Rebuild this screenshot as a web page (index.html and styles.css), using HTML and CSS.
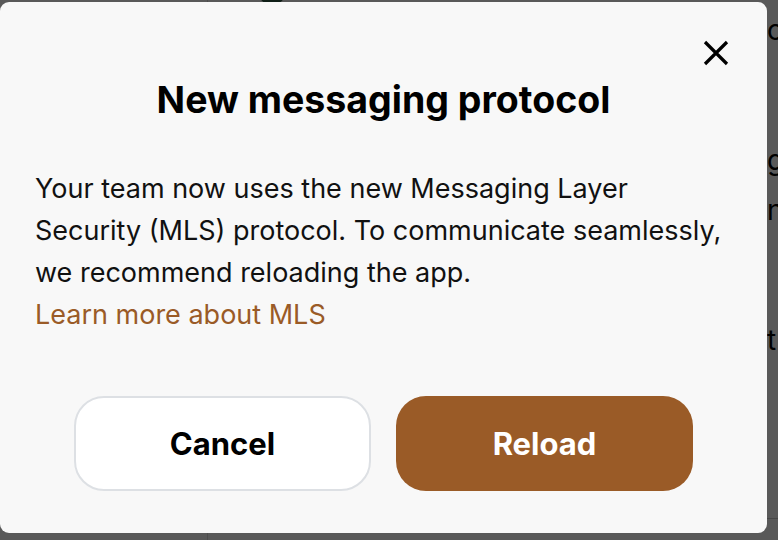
FILE: index.html
```html
<!DOCTYPE html>
<html lang="en">
  <head>
    <meta charset="UTF-8">
    <meta name="viewport" content="width=device-width, initial-scale=1.0">
    <title>New messaging protocol</title>
    <link rel="stylesheet" href="styles.css">
  </head>
  <body>
    <div class="app">
      <div class="sidebar">
        <div class="avatar"></div>
      </div>
      <div class="main">
        <div class="side-list">
          <p class="row-1">o</p>
          <p class="row-2">g</p>
          <p class="row-3">n</p>
          <p class="row-4">t</p>
        </div>
      </div>
    </div>

    <div class="overlay">
      <div class="modal">
        <button class="close-button" aria-label="Close">
          <svg width="26" height="26" viewBox="0 0 26 26">
            <path d="M2 2 L24 24 M24 2 L2 24" stroke="#000" stroke-width="3.2" fill="none"/>
          </svg>
        </button>
        <h1>New messaging protocol</h1>
        <p class="modal-text">
          Your team now uses the new Messaging Layer Security (MLS) protocol. To communicate seamlessly, we recommend reloading the app.
        </p>
        <a class="learn-link" href="#">Learn more about MLS</a>
        <div class="button-row">
          <button class="btn btn-cancel">Cancel</button>
          <button class="btn btn-reload">Reload</button>
        </div>
      </div>
    </div>
  </body>
</html>
```

FILE: styles.css
```css
body {
  margin: 0;
  padding: 0;
  font-family: Inter, "Noto Sans", sans-serif;
  width: 778px;
  height: 540px;
  overflow: hidden;
  background-color: #fff;
}

.app {
  display: flex;
  height: 540px;
}

.sidebar {
  width: 207px;
  border-right: 1px solid #ddd;
}

.avatar {
  width: 28px;
  height: 28px;
  border-radius: 50%;
  background-color: #2f5a44;
  margin: -23px 0 0 258px;
}

.main {
  flex: 1;
  display: flex;
  justify-content: flex-end;
  border-bottom: 1px solid #ccc;
  height: 518px;
}

.side-list {
  width: 11px;
  font-size: 28px;
  line-height: 34px;
  color: #000;
}

.side-list p {
  margin: 0;
}

.row-1 {
  padding-top: 13px;
}

.row-2 {
  padding-top: 96px;
}

.row-3 {
  padding-top: 16px;
}

.row-4 {
  padding-top: 96px;
}

.overlay {
  position: absolute;
  top: 0;
  left: 0;
  width: 778px;
  height: 540px;
  background-color: rgba(0, 0, 0, 0.65);
}

.modal {
  position: absolute;
  top: 2px;
  left: 0;
  width: 767px;
  height: 531px;
  box-sizing: border-box;
  background-color: #f8f8f8;
  border-radius: 9px;
  padding: 0 35px;
}

.close-button {
  position: absolute;
  top: 36px;
  right: 36px;
  width: 30px;
  height: 30px;
  padding: 2px;
  border: none;
  background: none;
  cursor: pointer;
}

h1 {
  margin: 0;
  padding-top: 75px;
  font-size: 37.5px;
  line-height: 46px;
  font-weight: 700;
  text-align: center;
  color: #000;
}

.modal-text {
  margin: 45px 0 0;
  font-size: 27px;
  line-height: 42px;
  color: #111;
}

.learn-link {
  display: block;
  font-size: 27px;
  line-height: 42px;
  color: #9a5b27;
  text-decoration: none;
}

.button-row {
  display: flex;
  justify-content: center;
  gap: 25px;
  margin-top: 60px;
}

.btn {
  width: 297px;
  height: 95px;
  border-radius: 30px;
  font-family: Inter, "Noto Sans", sans-serif;
  font-size: 31px;
  font-weight: 700;
  cursor: pointer;
}

.btn-cancel {
  background-color: #fff;
  border: 2px solid #dde0e4;
  color: #000;
}

.btn-reload {
  background-color: #9a5b27;
  border: none;
  color: #fff;
}
```
